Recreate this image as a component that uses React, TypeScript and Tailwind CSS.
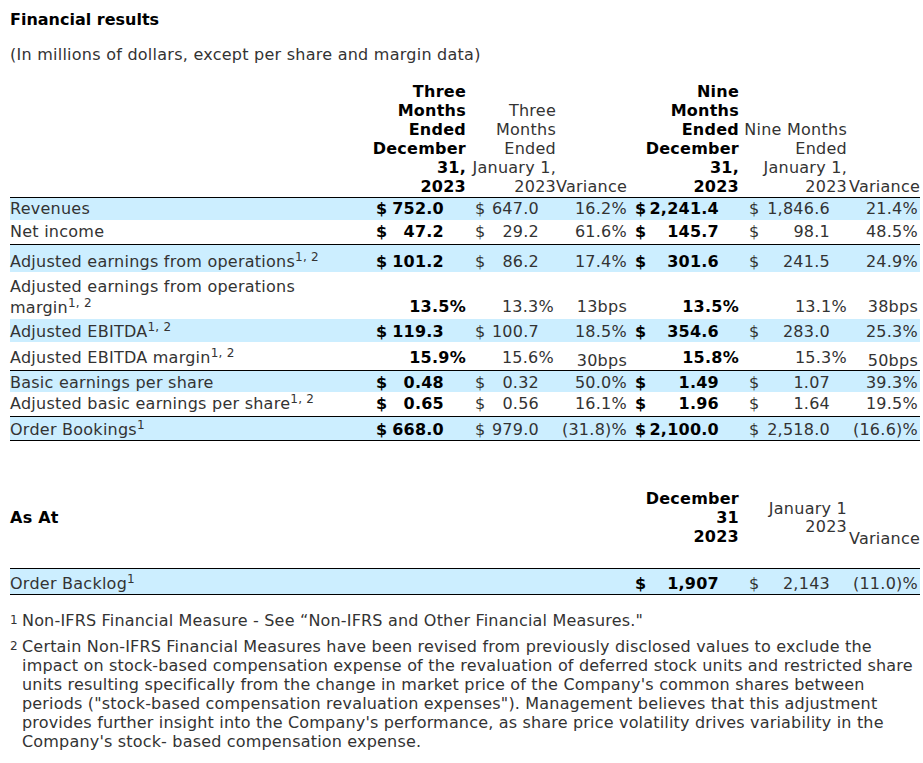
import React from 'react';

// A value is either a plain string (percent / bps) or a [$, amount] pair
type Value = string | [string, string];

interface ResultRow {
  label: React.ReactNode;
  values: Value[]; // c1, c2, var1, c3, c4, var2
  blue?: boolean;
  line?: boolean;
  height: string;
  pad?: string;
  lowBps?: boolean;
  tall?: boolean;
}

// Padding per column so the $ sign and the amounts land in the same place as the filing
const COLS = [
  { money: 'pl-[6px] pr-[24px]', plain: 'pr-[2px]', bold: true },
  { money: 'pl-[7px] pr-[17px]', plain: 'pr-[2px]', bold: false },
  { money: '', plain: 'pr-[2px]', bold: false },
  { money: 'pl-[6px] pr-[22px]', plain: 'pr-[2px]', bold: true },
  { money: 'pl-[8px] pr-[19px]', plain: 'pr-[2px]', bold: false },
  { money: '', plain: 'pr-[2px]', bold: false },
];

const Sup = ({ children }: { children: React.ReactNode }) => (
  <sup className="whitespace-nowrap text-[12px]">{children}</sup>
);

const rows: ResultRow[] = [
  {
    label: 'Revenues',
    values: [['$', '752.0'], ['$', '647.0'], '16.2%', ['$', '2,241.4'], ['$', '1,846.6'], '21.4%'],
    blue: true,
    height: 'h-[22px]',
  },
  {
    label: 'Net income',
    values: [['$', '47.2'], ['$', '29.2'], '61.6%', ['$', '145.7'], ['$', '98.1'], '48.5%'],
    line: true,
    height: 'h-[25px]',
  },
  {
    label: <>Adjusted earnings from operations<Sup>1, 2</Sup></>,
    values: [['$', '101.2'], ['$', '86.2'], '17.4%', ['$', '301.6'], ['$', '241.5'], '24.9%'],
    blue: true,
    height: 'h-[27px]',
    pad: 'pt-[6px]',
  },
  {
    label: (
      <div>
        <div className="pb-[2px]">Adjusted earnings from operations</div>
        <div>
          margin<Sup>1, 2</Sup>
        </div>
      </div>
    ),
    values: ['13.5%', '13.3%', '13bps', '13.5%', '13.1%', '38bps'],
    height: 'h-[47px]',
    tall: true,
  },
  {
    label: <>Adjusted EBITDA<Sup>1, 2</Sup></>,
    values: [['$', '119.3'], ['$', '100.7'], '18.5%', ['$', '354.6'], ['$', '283.0'], '25.3%'],
    blue: true,
    height: 'h-[23px]',
    pad: 'pt-[2px]',
  },
  {
    label: <>Adjusted EBITDA margin<Sup>1, 2</Sup></>,
    values: ['15.9%', '15.6%', '30bps', '15.8%', '15.3%', '50bps'],
    line: true,
    height: 'h-[28px]',
    pad: 'pt-[3px]',
    lowBps: true,
  },
  {
    label: 'Basic earnings per share',
    values: [['$', '0.48'], ['$', '0.32'], '50.0%', ['$', '1.49'], ['$', '1.07'], '39.3%'],
    blue: true,
    height: 'h-[22px]',
    pad: 'pt-[2px]',
  },
  {
    label: <>Adjusted basic earnings per share<Sup>1, 2</Sup></>,
    values: [['$', '0.65'], ['$', '0.56'], '16.1%', ['$', '1.96'], ['$', '1.64'], '19.5%'],
    line: true,
    height: 'h-[24px]',
  },
  {
    label: <>Order Bookings<Sup>1</Sup></>,
    values: [['$', '668.0'], ['$', '979.0'], '(31.8)%', ['$', '2,100.0'], ['$', '2,518.0'], '(16.6)%'],
    blue: true,
    line: true,
    height: 'h-[24px]',
    pad: 'pt-[2px]',
  },
];

const ColGroup = () => (
  <colgroup>
    <col className="w-[360px]" />
    <col className="w-[98px]" />
    <col className="w-[88px]" />
    <col className="w-[73px]" />
    <col className="w-[112px]" />
    <col className="w-[108px]" />
    <col className="w-[71px]" />
  </colgroup>
);

/**
 * Renders one value cell: "$" on the left edge, amount on the right
 */
const ValueCell = ({ value, col, className = '' }: { value: Value; col: number; className?: string }) => {
  const cfg = COLS[col];
  const weight = cfg.bold ? 'font-bold text-black' : 'text-[#333]';
  if (Array.isArray(value)) {
    return (
      <td className={`whitespace-nowrap ${weight} ${className}`}>
        <div className={`flex justify-between ${cfg.money}`}>
          <span>{value[0]}</span>
          <span>{value[1]}</span>
        </div>
      </td>
    );
  }
  return <td className={`whitespace-nowrap text-right ${weight} ${cfg.plain} ${className}`}>{value}</td>;
};

const App = () => {
  return (
    <div className="min-h-screen bg-white px-[10px] pt-[10px] text-[16px] leading-[19px] tracking-[0.25px] text-[#333] font-['DejaVu_Sans',Verdana,sans-serif]">
      {/* Heading */}
      <h2 className="font-bold tracking-normal text-black">Financial results</h2>
      <p className="mt-[16px]">(In millions of dollars, except per share and margin data)</p>

      {/* Period results table */}
      <table className="mt-[18px] w-[910px] table-fixed">
        <ColGroup />
        <thead>
          <tr className="border-b border-black">
            <th />
            <th className="pb-px pr-[2px] text-right align-bottom font-bold text-black">
              Three Months Ended December 31,<br />2023
            </th>
            <th className="pb-px text-right align-bottom font-normal">
              Three Months Ended January 1,<br />2023
            </th>
            <th className="pb-px pr-[2px] text-right align-bottom font-normal">Variance</th>
            <th className="pb-px pr-[2px] text-right align-bottom font-bold text-black">
              Nine Months Ended December 31,<br />2023
            </th>
            <th className="pb-px pr-[2px] text-right align-bottom font-normal">
              Nine Months Ended January 1,<br />2023
            </th>
            <th className="pb-px pr-[2px] text-right align-bottom font-normal">Variance</th>
          </tr>
        </thead>
        <tbody>
          {rows.map((row, i) => (
            <tr
              key={i}
              className={`${row.blue ? 'bg-[#cceeff]' : ''} ${row.line ? 'border-b border-black' : ''}`}
            >
              <td className={`${row.height} ${row.tall ? 'align-bottom pb-[2px]' : `align-middle ${row.pad ?? ''}`}`}>
                {row.label}
              </td>
              {row.values.map((v, j) => (
                <ValueCell
                  key={j}
                  value={v}
                  col={j}
                  className={
                    row.tall
                      ? 'align-bottom pb-[3px]'
                      : row.lowBps && (j === 2 || j === 5)
                        ? 'align-middle pt-[9px]'
                        : `align-middle ${row.pad ?? ''}`
                  }
                />
              ))}
            </tr>
          ))}
        </tbody>
      </table>

      {/* Balance "as at" table */}
      <table className="mt-[47px] w-[910px] table-fixed">
        <ColGroup />
        <thead>
          <tr>
            <th className="h-[60px] text-left align-middle font-bold text-black">As At</th>
            <th colSpan={3} />
            <th className="pr-[2px] text-right align-middle font-bold text-black">
              December<br />31<br />2023
            </th>
            <th className="pr-[2px] text-right align-middle font-normal leading-[18px]">
              January 1<br />2023
            </th>
            <th className="pr-[2px] text-right align-bottom font-normal">Variance</th>
          </tr>
          <tr>
            <th colSpan={7} className="h-[21px]" />
          </tr>
        </thead>
        <tbody>
          <tr className="border-y border-black bg-[#cceeff]">
            <td className="h-[26px] pt-[3px] align-middle">
              Order Backlog<Sup>1</Sup>
            </td>
            <td colSpan={3} />
            <ValueCell value={['$', '1,907']} col={3} className="pt-[3px] align-middle" />
            <ValueCell value={['$', '2,143']} col={4} className="pt-[3px] align-middle" />
            <ValueCell value="(11.0)%" col={5} className="pt-[3px] align-middle" />
          </tr>
        </tbody>
      </table>

      {/* Footnotes */}
      <div className="mt-[16px] flex flex-col gap-[7px] tracking-[0.18px]">
        <div className="flex">
          <span className="w-[12px] shrink-0 text-[12px] tracking-normal">1</span>
          <p>Non-IFRS Financial Measure - See “Non-IFRS and Other Financial Measures."</p>
        </div>
        <div className="flex">
          <span className="w-[12px] shrink-0 text-[12px] tracking-normal">2</span>
          <p className="whitespace-nowrap">
            Certain Non-IFRS Financial Measures have been revised from previously disclosed values to exclude the
            <br />
            impact on stock-based compensation expense of the revaluation of deferred stock units and restricted share
            <br />
            units resulting specifically from the change in market price of the Company's common shares between
            <br />
            periods ("stock-based compensation revaluation expenses"). Management believes that this adjustment
            <br />
            provides further insight into the Company's performance, as share price volatility drives variability in the
            <br />
            Company's stock- based compensation expense.
          </p>
        </div>
      </div>
    </div>
  );
};

export default App;
